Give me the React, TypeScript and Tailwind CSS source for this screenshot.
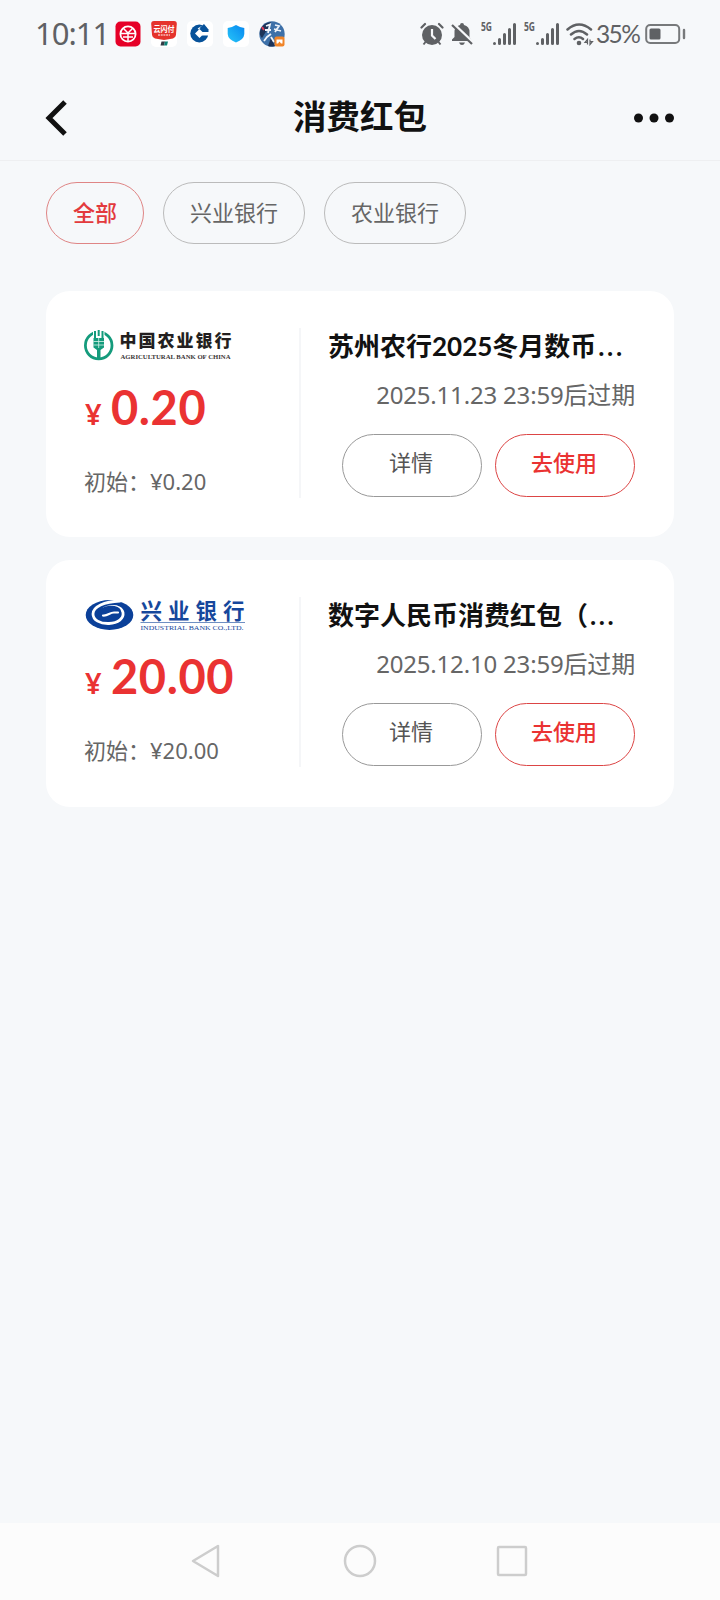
import React from "react";

const SANS = "font-['Noto_Sans','Noto_Sans_CJK_SC',sans-serif]";

function StatusBar() {
  return (
    <div className="flex h-[68px] shrink-0 items-center pl-[35px] pr-[34px] text-[#5f6164]">
      <span className="w-[80px] pb-[2px] text-[31px] leading-[66px] tracking-[-1px]">10:11</span>
      <svg className="h-[26px] w-[26px]" viewBox="0 0 26 26" fill="none">
        <rect x=".5" y=".5" width="25" height="25" rx="5" fill="#e60027" />
        <circle cx="13" cy="13" r="7.6" stroke="#fff" strokeWidth="1.8" />
        <path d="M8.5 7.5L13 12M17.5 7.5L13 12M13 12V20.5M6 12.5H20M8 16H18" stroke="#fff" strokeWidth="1.5" />
      </svg>
      <svg className="ml-[10px] h-[26px] w-[26px]" viewBox="0 0 26 26">
        <rect width="26" height="26" rx="5" fill="#fff" />
        <path d="M3 0H23Q26 0 25.800 3L25 14Q24.500 17 22 17.500L13 19L4 17.500Q1.500 17 1 14L.2 3Q0 0 3 0Z" fill="#e5332c" />
        <text x="13" y="10.500" textAnchor="middle" textLength="21" lengthAdjust="spacingAndGlyphs" fontSize="7.500" fontWeight="700" fill="#fff">云闪付</text>
        <path d="M7 14H19" stroke="#fff" strokeWidth="1.200" strokeDasharray="2 .7" />
        <path d="M10.500 20.500H14L13 24.500H9.500Z" fill="#333a45" />
        <path d="M14 20.500H17L16 24.500H13Z" fill="#0a8276" />
      </svg>
      <svg className="ml-[10px] h-[26px] w-[26px]" viewBox="0 0 26 26">
        <rect width="26" height="26" rx="5" fill="#fff" />
        <circle cx="12.300" cy="12.500" r="9" fill="#07529a" />
        <path d="M12.500 8L17 12.500L12.500 17L8 12.500Z" fill="#fff" />
        <path d="M15 11H23V14.500H15Z" fill="#fff" />
        <path d="M11 8L16.500 4.500" stroke="#fff" strokeWidth="1.200" />
        <path d="M13 6.500L17 3L21.500 8.500V11H16.500Z" fill="#07529a" />
      </svg>
      <svg className="ml-[10px] h-[26px] w-[26px]" viewBox="0 0 26 26">
        <defs>
          <linearGradient id="shield" x1="0" x2="1" y1="1" y2="0">
            <stop stopColor="#27c6f8" />
            <stop offset="1" stopColor="#0787f0" />
          </linearGradient>
        </defs>
        <rect width="26" height="26" rx="5" fill="#fff" />
        <path d="M13 4Q17 6.500 21.300 7V13Q21 18.500 13 21.500Q5 18.500 4.700 13V7Q9 6.500 13 4Z" fill="url(#shield)" />
      </svg>
      <svg className="ml-[10px] h-[26px] w-[26px]" viewBox="0 0 26 26" fill="none">
        <circle cx="13" cy="13" r="12.700" fill="#3d70a8" />
        <path d="M1 10Q3 2 12 1L8 9L3 17Q0 14 1 10ZM9 25L12 17L16 25Q12 26 9 25Z" fill="#1c3358" />
        <path d="M7 5L11 3.500L9 12M6 9H12M16 4L20 5L16 11M15 8L22 10M12 13L8 16L5 20M12 16L15 21" stroke="#eef3fa" strokeWidth="1.800" />
        <path d="M3 6L5 9" stroke="#e43b55" strokeWidth="2" />
        <rect x="15.500" y="15.500" width="10" height="10" rx="2" fill="#f08428" />
        <path d="M17.500 22.500V18.500H23.500V22.500H22L20.500 20.500L19 22.500Z" fill="#fff" />
      </svg>
      <div className="ml-auto flex items-center">
        <svg className="h-[24px] w-[24px]" viewBox="0 0 24 24" fill="none">
          <circle cx="12" cy="13" r="10" fill="#5f6164" />
          <path d="M1.500 5.500L5 2M19 2L22.500 5.500" stroke="#5f6164" strokeWidth="2.200" strokeLinecap="round" />
          <path d="M5.500 20L3.500 22.500M18.500 20L20.500 22.500" stroke="#5f6164" strokeWidth="2" />
          <path d="M12 7V13.500L15.500 17" stroke="#f7f8fa" strokeWidth="2.200" />
        </svg>
        <svg className="ml-[7px] h-[24px] w-[22px]" viewBox="0 0 22 24" fill="none">
          <path d="M11 1Q13 1 13 3Q18.500 4.500 18.500 10V15L21 19H1V17.500L3.500 15V10Q3.500 4.500 9 3Q9 1 11 1ZM8 20.500H14Q13 23 11 23Q9 23 8 20.500Z" fill="#5f6164" />
          <path d="M1 .5L22 20.500" stroke="#f7f8fa" strokeWidth="3" />
          <path d="M1 3L21 22" stroke="#5f6164" strokeWidth="2.200" />
        </svg>
        <Signal />
        <Signal />
        <svg className="ml-[7px] h-[24px] w-[28px]" viewBox="0 0 28 24" fill="none">
          <path d="M1.500 7.500Q13 -2.500 25 7.500M5 12.500Q13 5.500 21 12.500M8.500 17Q13 13.500 17 17" stroke="#5f6164" strokeWidth="2.500" strokeLinecap="round" />
          <circle cx="13" cy="21" r="2.300" fill="#5f6164" />
          <path d="M21.500 22.500V17.500L19 20.500H22M24 17.500V22.500L26.500 19.500H24" stroke="#5f6164" strokeWidth="1.200" />
        </svg>
        <span className="ml-[2px] w-[49px] whitespace-nowrap font-['Lato',sans-serif] text-[24.500px] leading-[68px] tracking-[-1.600px]">35%</span>
        <svg className="h-[22px] w-[41px]" viewBox="0 0 41 22" fill="none">
          <rect x="1.200" y="2" width="33" height="18" rx="4" stroke="#77797b" strokeWidth="2" />
          <rect x="4.500" y="5.500" width="11" height="11" rx="1.500" fill="#5f6164" />
          <path d="M39 7V15" stroke="#77797b" strokeWidth="2.400" strokeLinecap="round" />
        </svg>
      </div>
    </div>
  );
}

function Signal() {
  return (
    <svg className="ml-[8px] h-[32px] w-[35px]" viewBox="0 -4 35 32">
      <text x="0" y="9" textLength="11" lengthAdjust="spacingAndGlyphs" fontSize="12.500" fontWeight="700" fill="#5f6164">5G</text>
      <path d="M13.500 21.500V21.490M18.500 21.500V17.500M23.500 21.500V12.500M28.500 21.500V7.500M33.500 21.500V2.500" stroke="#5f6164" strokeWidth="3" strokeLinecap="round" />
    </svg>
  );
}

function AbcLogo() {
  return (
    <svg className="h-[40px] w-[152px] overflow-visible" viewBox="0 0 152 40" fill="none">
      <circle cx="14.700" cy="17.500" r="13.300" stroke="#149b7c" strokeWidth="2.800" />
      <path d="M9 1H20.500V9H9Z" fill="#fff" />
      <path d="M11 3V10M14.700 2V8M18.500 3V10" stroke="#149b7c" strokeWidth="2" />
      <path d="M9.500 10H20V19.500L16.500 22V31H13V22L9.500 19.500Z" fill="#149b7c" />
      <path d="M14.700 10V20M9.500 13.500H20M9.500 17H20" stroke="#d9f2ea" strokeWidth=".8" />
      <text x="35.500" y="18.500" textLength="112" fontSize="17" fontWeight="900" fill="#231f20" className="font-['Noto_Sans_CJK_SC',sans-serif]">中国农业银行</text>
      <text x="36.500" y="31" textLength="110" lengthAdjust="spacingAndGlyphs" fontSize="6.800" fontWeight="700" fill="#3a3536" className="font-['Liberation_Serif',serif]">AGRICULTURAL BANK OF CHINA</text>
    </svg>
  );
}

function CibLogo() {
  return (
    <svg className="h-[40px] w-[164px] overflow-visible" viewBox="0 0 164 40" fill="none">
      <ellipse cx="25.500" cy="18" rx="23.800" ry="15" fill="#0b4099" />
      <path d="M36 4C20 4.500 9 10 9 17C9 23 16 26.800 25 26.500C34 26 40 21.500 39 15.500C38 11 33 9.200 28 9.500C22 9.800 18 12.500 16.500 16" stroke="#fff" strokeWidth="2.800" strokeLinecap="round" />
      <path d="M13.500 19C13 13 19 8.800 27 8.800C32 8.800 36 10.500 37 13.500L24 16L22 19Z" fill="#0b4099" />
      <path d="M19 18.500C24 19 25.500 15.500 30 15.500H34" stroke="#fff" strokeWidth="2.200" strokeLinecap="round" />
      <text x="56.500" y="21.500" textLength="104" fontSize="21.500" fontWeight="700" fill="#16479c" className="font-['Noto_Sans_CJK_SC',sans-serif]">兴业银行</text>
      <path d="M56.500 25.500H161" stroke="#6f8fc2" />
      <text x="56.500" y="32.500" textLength="103" lengthAdjust="spacingAndGlyphs" fontSize="7" fill="#16479c" className="font-['Liberation_Serif',serif]">INDUSTRIAL BANK CO.,LTD.</text>
    </svg>
  );
}

type CardProps = { logo: React.ReactNode; amount: string; title: string; date: string; heightClass: string };

function PacketCard({ logo, amount, title, date, heightClass }: CardProps) {
  return (
    <section className={`flex rounded-[24px] bg-white pl-[38px] pr-[39px] pt-[37px] ${heightClass}`}>
      <div className="flex h-[170px] w-[217px] shrink-0 flex-col border-r-2 border-[#f5f6f8]">
        {logo}
        <div className="mt-[6px] flex h-[66px] items-baseline pl-px font-semibold text-[#ea3232]">
          <span className="w-[26px] text-[29px]">¥</span>
          <span className="font-['Lato',sans-serif] text-[47px] font-bold leading-[66px] tracking-[0.600px]">{amount}</span>
        </div>
        <div className="mt-[25px] flex text-[22px] leading-[32px] text-[#666]">
          <span>初始：</span>
          <span>¥{amount}</span>
        </div>
      </div>
      <div className="flex min-w-0 flex-1 flex-col pl-[27px]">
        <h2 className="h-[36px] whitespace-nowrap font-['Lato','Noto_Sans_CJK_SC',sans-serif] text-[26px] font-bold leading-[36px] text-[#111]">
          {title}
          <span className="ml-[2px] tracking-[2.600px]">...</span>
        </h2>
        <p className="mt-[13px] whitespace-nowrap text-right text-[24px] leading-[36px] tracking-[-0.180px] text-[#666]">{date}后过期</p>
        <div className="mt-[21px] flex justify-end gap-[13px]">
          <button className="h-[63px] w-[140px] rounded-full border border-[#999] pb-[6px] pr-[2px] text-[22px] text-[#555]">详情</button>
          <button className="h-[63px] w-[140px] rounded-full border border-[#dc4545] pb-[6px] pr-[2px] text-[22px] font-medium text-[#ea3232]">去使用</button>
        </div>
      </div>
    </section>
  );
}

export default function App() {
  return (
    <div className={`flex h-[1600px] w-[720px] flex-col overflow-hidden bg-[#f6f8fa] ${SANS}`}>
      <StatusBar />
      <header className="flex h-[93px] shrink-0 items-center justify-between border-b border-[#eeeff1] pl-[45px] pr-[45px]">
        <svg className="mt-[7px] h-[36px] w-[42px]" viewBox="0 0 42 36" fill="none">
          <path d="M20 2L4 18L20 34" stroke="#111" strokeWidth="5" />
        </svg>
        <h1 className="mt-[3px] text-[33.500px] font-bold leading-[48px] text-[#111]">消费红包</h1>
        <svg className="mt-[7px] h-[12px] w-[42px]" viewBox="0 0 42 12" fill="#111">
          <circle cx="5.500" cy="6" r="4.500" />
          <circle cx="21" cy="6" r="4.500" />
          <circle cx="36.500" cy="6" r="4.500" />
        </svg>
      </header>
      <main className="flex flex-1 flex-col px-[46px] pt-[21px]">
        <div className="flex gap-[19px] text-[22px]">
          <button className="h-[62px] w-[98px] rounded-full border border-[#df8585] pb-[2px] font-medium text-[#e33a3d]">全部</button>
          <button className="h-[62px] w-[142px] rounded-full border border-[#bbb] pb-[2px] text-[#666]">兴业银行</button>
          <button className="h-[62px] w-[142px] rounded-full border border-[#bbb] pb-[2px] text-[#666]">农业银行</button>
        </div>
        <div className="mt-[47px] flex flex-col gap-[23px]">
          <PacketCard logo={<AbcLogo />} amount="0.20" title="苏州农行2025冬月数币" date="2025.11.23 23:59" heightClass="h-[246px]" />
          <PacketCard logo={<CibLogo />} amount="20.00" title="数字人民币消费红包（" date="2025.12.10 23:59" heightClass="h-[247px]" />
        </div>
      </main>
      <nav className="flex h-[77px] shrink-0 items-center justify-between bg-[#fcfcfc] pb-[2px] pl-[189px] pr-[192px]">
        <svg className="h-[36px] w-[32px]" viewBox="0 0 32 36" fill="none">
          <path d="M29 3V33L4 18Z" stroke="#cdcdcd" strokeWidth="2.500" strokeLinejoin="round" />
        </svg>
        <svg className="h-[36px] w-[36px]" viewBox="0 0 36 36" fill="none">
          <circle cx="19" cy="18" r="15" stroke="#cdcdcd" strokeWidth="2.500" />
        </svg>
        <svg className="h-[32px] w-[32px]" viewBox="0 0 32 32" fill="none">
          <rect x="2" y="2" width="28" height="28" rx="1" stroke="#cdcdcd" strokeWidth="2.500" />
        </svg>
      </nav>
    </div>
  );
}
